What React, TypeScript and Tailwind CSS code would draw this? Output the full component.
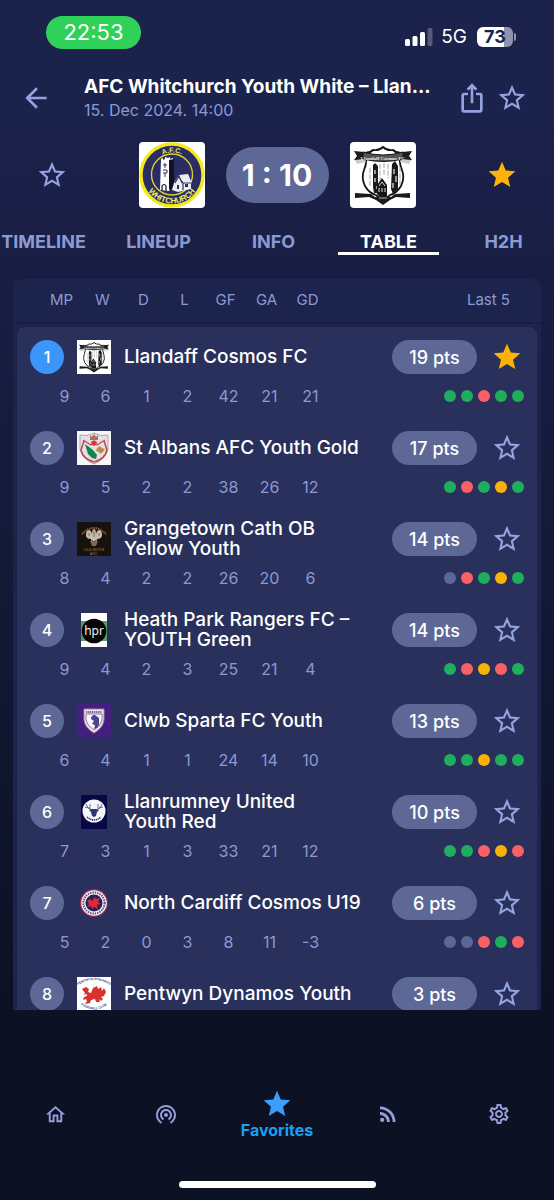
import React, { useState } from 'react';
import clsx from 'clsx';
import {
  MdArrowBack,
  MdIosShare,
  MdOutlineHome,
  MdOutlineSettings,
  MdRssFeed,
  MdStar,
  MdStarOutline,
  MdWifiTethering,
} from 'react-icons/md';

type Result = 'W' | 'D' | 'L' | '-';

interface Team {
  name: string;
  crest: React.FC;
  stats: number[];
  points: number;
  form: string;
}

interface StarButtonProps {
  active: boolean;
  label: string;
  onClick?: () => void;
}

const COLUMNS = ['MP', 'W', 'D', 'L', 'GF', 'GA', 'GD'];
const TABS = ['TIMELINE', 'LINEUP', 'INFO', 'TABLE', 'H2H'];

const FORM_COLORS: Record<Result, string> = {
  W: 'bg-[#1fae5e]',
  D: 'bg-[#f9b208]',
  L: 'bg-[#fb6064]',
  '-': 'bg-[#5d6796]',
};

const WhitchurchCrest: React.FC = () => (
  <svg viewBox="0 0 66 66" className="size-full" fontFamily="Liberation Sans, sans-serif" fontWeight="bold">
    <rect width="66" height="66" fill="#fff" />
    <circle cx="33" cy="33" r="31" fill="#2a2d63" stroke="#f3ea1c" strokeWidth="3.4" />
    <circle cx="33" cy="32.5" r="20.5" fill="#2a2d63" stroke="#ded832" strokeWidth="1.3" />
    <path d="M22 17l2-1v2l2-1v-2l3 1 2-1v2l3-1v31l-5 2-8-1z" fill="#fff" />
    <path d="M30 18l5-1v27l-3 5-2-2z" fill="#111222" />
    <path d="M24 23h4M26 21v5M24 28h4v3h-4M26 31v4" fill="none" stroke="#34375c" />
    <path d="M23 49v-5q2-3 4 0v5" fill="none" stroke="#111222" strokeWidth="1.2" />
    <path d="M35 41l5-8 9-1 3 7v8l-13 3-6-2z" fill="#eceef2" />
    <path d="M39 34l5 7v7M36 41l4-7 3 7M44 41h8M43 31v-4l2-2 2 6" fill="none" stroke="#30355f" strokeWidth="1.2" />
    <path d="M38 43h2v4h-2zM46 42h3v3h-3z" fill="#2a2d63" />
    <path id="wcTop" d="M10.5 33a22.5 22.5 0 0 1 45 0" fill="none" />
    <path id="wcBottom" d="M4.5 33a28.5 28.5 0 0 0 57 0" fill="none" />
    <text fontSize="7" fill="#e9e36a" textAnchor="middle">
      <textPath href="#wcTop" startOffset="50%">A.F.C.</textPath>
    </text>
    <text fontSize="8" fill="#f0e96c" textAnchor="middle">
      <textPath href="#wcBottom" startOffset="50%">WHITCHURCH</textPath>
    </text>
  </svg>
);

const LlandaffCrest: React.FC = () => (
  <svg viewBox="0 0 66 66" className="size-full">
    <rect width="66" height="66" fill="#fff" />
    <path
      d="M15 11q5 0 8-3 6 1 10-3 4 4 10 3 3 3 8 3-3 8 1 17 3 8-1 16-4 7-11 9l-7 6-7-6q-7-2-11-9-4-8-1-16 4-9 1-17z"
      fill="#fff"
      stroke="#151515"
      strokeWidth="1.8"
    />
    <path d="M4 9l10 1 2 9-12-1 3-4zM62 9l-10 1-2 9 12-1-3-4z" fill="#1d1d1d" />
    <path d="M5 18l10-1 1 3-9 2zM61 18l-10-1-1 3 9 2z" fill="#ccc" />
    <path d="M13 10q20 6 40 0v7q-20 5-40 0z" fill="#555" stroke="#151515" />
    <text x="33" y="18" fontSize="5" fontFamily="Liberation Serif, serif" fontWeight="bold" fill="#eee" textAnchor="middle">
      Llandaff Cosmos FC
    </text>
    <path d="M23 23l2-2 3 3v27h-4l-1-6zM42 22l3-3 3 5v23l-5 5-2-5z" fill="#1b1b1b" />
    <path d="M20 26v18M30 22v16M38 22v14M50 25v18M34 21v12" stroke="#aaa" strokeWidth="1.1" strokeDasharray="5 1.4" />
    <path d="M25 28v4M25 36v4M44 27v5M46 34v6M43 41v5M27 44v3" stroke="#fff" strokeWidth="1.1" />
    <path d="M27 52v-9l5-7 5 7v12l-5 3z" fill="#161616" />
    <path d="M29 44l3-4 3 4M29 46v4M32 46v4M35 46v4" fill="none" stroke="#ddd" />
    <path d="M5 51l16 1 4 3h16l4-3 15-1v5l-14-1-6 3-7 5-7-5-7-3-14 1z" fill="#1b1b1b" />
    <path d="M29 55h8v2h-8z" fill="#666" />
  </svg>
);

const StAlbansCrest: React.FC = () => (
  <svg viewBox="0 0 34 34" className="size-full">
    <rect width="34" height="34" fill="#f7f6f4" />
    <path d="M3 4q7 2 14-2 7 4 14 2v14q-2 10-14 15Q5 28 3 18z" fill="#e3e1e6" stroke="#aaa5ad" strokeWidth="1" />
    <path d="M7 10L4 19q2 9 13 12 11-3 13-12l-3-9" fill="none" stroke="#cf3546" strokeWidth="1.4" />
    <path d="M6 9l8 5 3-4 3 4 8-5" fill="none" stroke="#d13c4b" strokeWidth="1.2" />
    <path d="M8 13l4 3 4 3 4 5-1 4-4-1-4-4z" fill="#168548" />
    <path d="M20 17l3-2 2 2 3 1-2 3-3 2-1-2-3-1z" fill="#bf8b4d" />
    <path d="M14 11q3-3 6 0l-1 3-2 1-2-1z" fill="#d63d31" />
    <path d="M13 4l2 2 2-3 2 3 2-2v5h-8z" fill="#b26b58" />
    <path d="M9 28q8 5 16 0" fill="none" stroke="#9b8a90" strokeDasharray="1 1" />
  </svg>
);

const GrangetownCrest: React.FC = () => (
  <svg viewBox="0 0 34 34" className="size-full">
    <rect width="34" height="34" fill="#17120e" />
    <path d="M5 12q12-12 24 0" fill="none" stroke="#87633e" strokeWidth="2" strokeDasharray="1.4 .8" />
    <path d="M14 17q-5 0-5-4 0-5 3-5 3 1 3 5 0-6 2-6t2 6q0-4 3-5 3 0 3 5 0 4-5 4l-1 5h-4z" fill="#c4bbaa" />
    <path d="M12 11v3M17 9v6M22 11v3" stroke="#70604e" strokeWidth=".8" />
    <path d="M13 19h8l-2 5h-4z" fill="#8a6646" />
    <path d="M15 18l2 2 2-2" fill="none" stroke="#406353" />
    <text x="17" y="28.5" fontSize="4" fontFamily="Liberation Sans, sans-serif" fill="#b07b49" textAnchor="middle">OLD BOYS</text>
    <text x="17" y="32.5" fontSize="3" fontFamily="Liberation Sans, sans-serif" fill="#b07b49" textAnchor="middle">A.F.C.</text>
  </svg>
);

const HeathParkCrest: React.FC = () => (
  <svg viewBox="0 0 26 34" className="h-full">
    <rect width="26" height="34" fill="#fff" />
    <rect y="8" width="26" height="20" fill="#5d9a62" />
    <circle cx="13" cy="18" r="12.3" fill="#050505" />
    <text x="13" y="21.5" fontSize="12" fontFamily="Open Sans, sans-serif" fill="#fff" textAnchor="middle">hpr</text>
  </svg>
);

const SpartaCrest: React.FC = () => (
  <svg viewBox="0 0 34 34" className="size-full">
    <rect width="34" height="34" fill="#43207f" />
    <path d="M7 5h20v11q-1 8-10 13Q8 24 7 16z" fill="#ece7ee" stroke="#a78391" strokeWidth="1" />
    <path d="M9 10h16v6q-1 6-8 10-7-4-8-10z" fill="#f8f7fa" stroke="#6d5795" strokeWidth=".8" />
    <path d="M14 15q0-4 4-4l4 3v7l-2 3-3 1 1-4-3-1 2-3z" fill="#4b438e" />
    <path d="M9 8h16" stroke="#5a427e" strokeWidth="1.6" strokeDasharray="1.4 .6" />
  </svg>
);

const LlanrumneyCrest: React.FC = () => (
  <svg viewBox="0 0 26 34" className="h-full">
    <rect width="26" height="34" fill="#080847" />
    <circle cx="13" cy="16" r="11.5" fill="#f7f7fa" />
    <path
      d="M11 15q-5-1-6-6M15 15q5-1 6-6M8 13l-4-1M18 13l4-1M9 14V9M17 14V9"
      fill="none"
      stroke="#444b79"
      strokeWidth=".8"
    />
    <path d="M8 15l3-1h4l3 1-2 2-1 4-2 1-2-1-1-4z" fill="#30376c" />
    <path d="M6 22q7 6 14 0" fill="none" stroke="#272e68" strokeWidth="1.6" strokeDasharray="1.3 .6" />
  </svg>
);

const NorthCardiffCrest: React.FC = () => (
  <svg viewBox="0 0 34 34" className="size-full">
    <circle cx="17" cy="17" r="14" fill="#a82350" />
    <circle cx="17" cy="17" r="12.8" fill="#f1eff5" />
    <circle cx="17" cy="17" r="10.6" fill="none" stroke="#55517f" strokeWidth="2" strokeDasharray="1.4 1" />
    <circle cx="17" cy="17" r="8.5" fill="#27224f" />
    <path d="M10 15l3-2 2 2 3-4 1 2 4-1-2 4 3 2-4 1 1 4-4-2-2 2-1-3-4 1 2-3z" fill="#e3243d" />
  </svg>
);

const PentwynCrest: React.FC = () => (
  <svg viewBox="0 0 34 34" className="size-full" fontFamily="Liberation Sans, sans-serif" fontWeight="bold">
    <rect width="34" height="34" fill="#fff" />
    <path
      d="M5 12l4-2 3 2-1 3 3 1 2-5 4-2 1 3 3-2 1 4 2-3 2 4-2 4-3 1 2 2-2 2-2-2 1 3h-4l-1-3-4 1-1 3-5 1 2-3-1-2-3 1 1-3 3-1v-2l-3 1 1-2z"
      fill="#d8322e"
    />
    <path id="pdTop" d="M1 8q16-10 32 0" fill="none" />
    <path id="pdBottom" d="M3 27q14 11 28 0" fill="none" />
    <text fontSize="3.3" fill="#314f78" textAnchor="middle">
      <textPath href="#pdTop" startOffset="50%">PENTWYN DYNAMOS</textPath>
    </text>
    <text fontSize="3.3" fill="#314f78" textAnchor="middle">
      <textPath href="#pdBottom" startOffset="50%">FOOTBALL CLUB</textPath>
    </text>
  </svg>
);

const TEAMS: Team[] = [
  { name: 'Llandaff Cosmos FC', crest: LlandaffCrest, stats: [9, 6, 1, 2, 42, 21, 21], points: 19, form: 'WWLWW' },
  { name: 'St Albans AFC Youth Gold', crest: StAlbansCrest, stats: [9, 5, 2, 2, 38, 26, 12], points: 17, form: 'WLWDW' },
  { name: 'Grangetown Cath OB\nYellow Youth', crest: GrangetownCrest, stats: [8, 4, 2, 2, 26, 20, 6], points: 14, form: '-LWDW' },
  { name: 'Heath Park Rangers FC –\nYOUTH Green', crest: HeathParkCrest, stats: [9, 4, 2, 3, 25, 21, 4], points: 14, form: 'WLDLW' },
  { name: 'Clwb Sparta FC Youth', crest: SpartaCrest, stats: [6, 4, 1, 1, 24, 14, 10], points: 13, form: 'WWDWW' },
  { name: 'Llanrumney United\nYouth Red', crest: LlanrumneyCrest, stats: [7, 3, 1, 3, 33, 21, 12], points: 10, form: 'WWLDL' },
  { name: 'North Cardiff Cosmos U19', crest: NorthCardiffCrest, stats: [5, 2, 0, 3, 8, 11, -3], points: 6, form: '--LWL' },
  { name: 'Pentwyn Dynamos Youth', crest: PentwynCrest, stats: [], points: 3, form: '' },
];

const StarButton: React.FC<StarButtonProps> = ({ active, label, onClick }) => (
  <button type="button" aria-label={label} aria-pressed={active} onClick={onClick} className="block">
    {active ? <MdStar className="size-8 text-[#fbb209]" /> : <MdStarOutline className="size-8 text-[#94a3e0]" />}
  </button>
);

const StatusBar: React.FC = () => (
  <div className="flex h-16 items-center justify-between pl-[46px] pr-[38px]">
    <span className="flex h-[33px] w-[95px] items-center justify-center rounded-full bg-[#30d158] text-[22px] text-white">
      22:53
    </span>
    <div className="flex items-center pt-2.5">
      <svg viewBox="0 0 28 18" className="h-[18px] w-7" fill="#fff">
        <rect x="0" y="11" width="5" height="7" rx="1.5" />
        <rect x="7.5" y="8" width="5" height="10" rx="1.5" />
        <rect x="15" y="4" width="5" height="14" rx="1.5" />
        <rect x="22.5" y="0" width="5" height="18" rx="1.5" opacity=".25" />
      </svg>
      <span className="ml-2 text-[19px] leading-5 text-white">5G</span>
      <span className="ml-2.5 flex h-5 w-9 items-center justify-center rounded-md bg-linear-to-r from-white from-75% to-[#9192ab] to-75% text-[18px] font-bold leading-5 text-[#1b234c]">
        73
      </span>
      <span className="ml-px h-2 w-0.5 rounded-r-full bg-[#9192ab]" />
    </div>
  </div>
);

const StandingsTable: React.FC = () => {
  const [favorites, setFavorites] = useState<string[]>(['Llandaff Cosmos FC']);

  const toggleFavorite = (name: string) => {
    setFavorites((prev) => (prev.includes(name) ? prev.filter((n) => n !== name) : [...prev, name]));
  };

  return (
    <table className="block rounded-t-lg bg-[#1c234d]">
      <thead className="block border-b-2 border-[#181e43]">
        <tr className="flex h-[43px] items-center pl-7 pr-[31px] text-[15px] text-[#8c9ad4]">
          {COLUMNS.map((col) => (
            <th key={col} scope="col" className="w-[41px] font-normal">{col}</th>
          ))}
          <th scope="col" className="ml-auto font-normal">Last 5</th>
        </tr>
      </thead>
      <tbody className="mx-1 mt-[3px] block rounded-t-lg bg-[#28305b]">
        {TEAMS.map((team, i) => {
          const Crest = team.crest;
          return (
            <React.Fragment key={team.name}>
              <tr className="flex items-center pl-[13px] pr-3.5 pt-[13px]">
                <td
                  className={clsx(
                    'flex size-[34px] shrink-0 items-center justify-center rounded-full font-medium text-white',
                    i === 0 ? 'bg-[#3c95f9]' : 'bg-[#5d6896]',
                  )}
                >
                  {i + 1}
                </td>
                <td className="ml-[13px] flex size-[34px] shrink-0 justify-center">
                  <Crest />
                </td>
                <th scope="row" className="ml-[13px] flex h-[34px] min-w-0 flex-1 items-center whitespace-pre text-left text-[19px] font-medium leading-5 text-white">
                  {team.name}
                </th>
                <td className="flex h-[34px] w-[85px] shrink-0 items-center justify-center rounded-full bg-[#5d6896] text-[18px] font-medium text-white">
                  {team.points} pts
                </td>
                <td className="ml-3.5">
                  <StarButton
                    active={favorites.includes(team.name)}
                    label={`Favorite ${team.name}`}
                    onClick={() => toggleFavorite(team.name)}
                  />
                </td>
              </tr>
              <tr className="flex items-center pb-2.5 pl-[27px] pr-[13px] pt-2.5 leading-6 text-[#8c9ad4]">
                {team.stats.map((stat, n) => (
                  <td key={COLUMNS[n]} className="w-[41px] text-center">{stat}</td>
                ))}
                <td className="ml-auto flex gap-[5px]">
                  {team.form.split('').map((result, n) => (
                    <span key={n} className={clsx('size-3 rounded-full', FORM_COLORS[result as Result])} />
                  ))}
                </td>
              </tr>
            </React.Fragment>
          );
        })}
      </tbody>
    </table>
  );
};

const BottomNav: React.FC = () => (
  <nav className="flex h-[190px] shrink-0 flex-col justify-between bg-[#0c1124] pb-3 pt-[76px] text-[#949fd8]">
    <div className="flex h-14 items-center">
      <a href="#home" aria-label="Home" className="flex flex-1 justify-center"><MdOutlineHome className="size-[23px]" /></a>
      <a href="#live" aria-label="Live" className="flex flex-1 justify-center"><MdWifiTethering className="size-6" /></a>
      <a href="#favorites" className="flex flex-1 flex-col items-center font-bold leading-5 text-[#18a0f5]">
        <MdStar className="size-8 text-[#3c9dfb]" />
        Favorites
      </a>
      <a href="#news" aria-label="News" className="flex flex-1 justify-center"><MdRssFeed className="size-6" /></a>
      <a href="#settings" aria-label="Settings" className="flex flex-1 justify-center"><MdOutlineSettings className="size-6" /></a>
    </div>
    <div className="mx-auto h-[7px] w-[197px] rounded-full bg-white" />
  </nav>
);

const App: React.FC = () => {
  const [activeTab, setActiveTab] = useState('TABLE');

  return (
    <div className="flex h-screen flex-col overflow-hidden bg-[#0c1124] font-['Inter','Liberation_Sans',sans-serif]">
      <header className="shrink-0 border-b border-[#171c40] bg-[#1b234c]">
        <StatusBar />
        <div className="flex h-[65px] items-center pl-5 pr-[26px] pt-[3px]">
          <button type="button" aria-label="Back" className="shrink-0 text-[#94a3e0]">
            <MdArrowBack className="size-8" />
          </button>
          <div className="ml-8 min-w-0 flex-1">
            <h1 className="truncate text-[19px] font-bold leading-6 text-white">AFC Whitchurch Youth White – Llan...</h1>
            <p className="leading-[22px] text-[#8c9ad4]">15. Dec 2024. 14:00</p>
          </div>
          <button type="button" aria-label="Share" className="mr-2 shrink-0 text-[#94a3e0]">
            <MdIosShare className="size-8" />
          </button>
          <StarButton active={false} label="Favorite match" />
        </div>
      </header>

      <main className="flex min-h-0 flex-1 flex-col bg-linear-to-b from-[#1b214a] to-[#0c1124]">
        <section className="flex shrink-0 items-center justify-between px-9 pt-3">
          <StarButton active={false} label="Favorite AFC Whitchurch" />
          <div className="flex items-center gap-[21px]">
            <div className="size-[66px] overflow-hidden rounded-sm"><WhitchurchCrest /></div>
            <div className="flex h-14 w-[103px] items-center justify-center rounded-full bg-[#5d6896] text-[30px] font-bold text-white">
              1 : 10
            </div>
            <div className="size-[66px] overflow-hidden rounded-sm"><LlandaffCrest /></div>
          </div>
          <StarButton active label="Favorite Llandaff Cosmos FC" />
        </section>

        <div role="tablist" className="-ml-3.5 mt-6 flex shrink-0">
          {TABS.map((tab) => (
            <button
              key={tab}
              type="button"
              role="tab"
              aria-selected={tab === activeTab}
              onClick={() => setActiveTab(tab)}
              className={clsx(
                'flex w-[115px] shrink-0 flex-col items-center text-[18px] font-bold leading-5',
                tab === activeTab ? 'text-white' : 'text-[#8c9ad4]',
              )}
            >
              {tab}
              <span className={clsx('h-[3px] w-[101px]', tab === activeTab && 'bg-white')} />
            </button>
          ))}
        </div>

        <div className="mx-[13px] mt-6 min-h-0 flex-1 overflow-hidden">
          <StandingsTable />
        </div>
      </main>

      <BottomNav />
    </div>
  );
};

export default App;
